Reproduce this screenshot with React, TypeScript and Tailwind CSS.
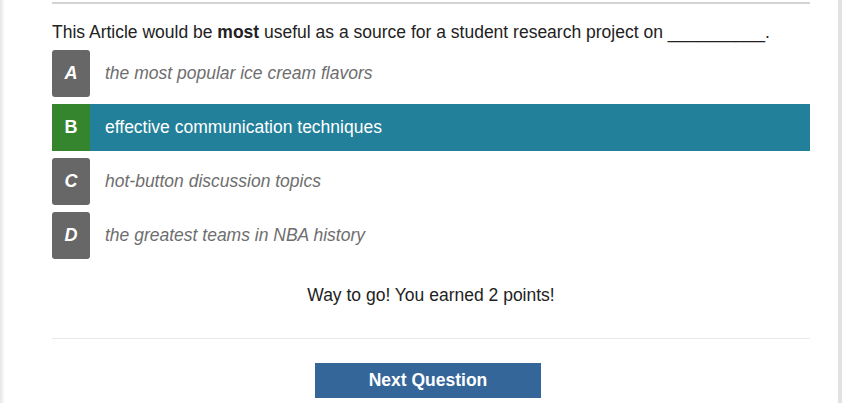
import React from "react";

type Option = { letter: string; text: string; correct?: boolean };

const options: Option[] = [
  { letter: "A", text: "the most popular ice cream flavors" },
  { letter: "B", text: "effective communication techniques", correct: true },
  { letter: "C", text: "hot-button discussion topics" },
  { letter: "D", text: "the greatest teams in NBA history" },
];

function OptionRow({ opt }: { opt: Option }) {
  if (opt.correct) {
    return (
      <div className="flex h-[47px] items-center bg-[#22809b]">
        <div className="flex h-full w-[38px] items-center justify-center bg-[#35852f] text-[18px] font-bold text-white">
          {opt.letter}
        </div>
        <span className="ml-[15px] text-[17.5px] text-white">{opt.text}</span>
      </div>
    );
  }
  return (
    <div className="flex h-[47px] items-center">
      <div className="flex h-full w-[38px] items-center justify-center rounded-[3px] bg-[#676767] text-[18px] font-bold italic text-white">
        {opt.letter}
      </div>
      <span className="ml-[15px] text-[17.5px] italic text-[#6e6e6e]">{opt.text}</span>
    </div>
  );
}

export default function App() {
  return (
    <div
      className="flex h-[403px] w-full overflow-hidden bg-white"
      style={{ fontFamily: '"Liberation Sans", Arial, sans-serif' }}
    >
      <div className="w-[5px] bg-gradient-to-r from-[#e6e6e6] to-white" />
      <div className="ml-[47px] flex w-[758px] flex-col">
        <div className="mt-[2px] h-[2px] bg-[#d3d3d3]" />
        <p className="mt-[18px] text-[17.5px] leading-[20px] text-[#222]">
          This Article would be <strong>most</strong> useful as a source for a student research project on __________.
        </p>
        <div className="mt-[8px] flex flex-col gap-[7px]">
          {options.map((o) => (
            <OptionRow key={o.letter} opt={o} />
          ))}
        </div>
        <p className="mt-[26px] text-center text-[17.5px] leading-[20px] text-[#222]">
          Way to go! You earned 2 points!
        </p>
        <div className="mt-[33px] h-px bg-[#e8e8e8]" />
        <div className="mt-[24px] flex justify-center pr-[6px]">
          <button className="h-[35px] w-[226px] bg-[#346699] text-[17.5px] font-bold text-white">
            Next Question
          </button>
        </div>
      </div>
      <div className="ml-auto w-[4px] bg-[#e2e2e2]" />
    </div>
  );
}
